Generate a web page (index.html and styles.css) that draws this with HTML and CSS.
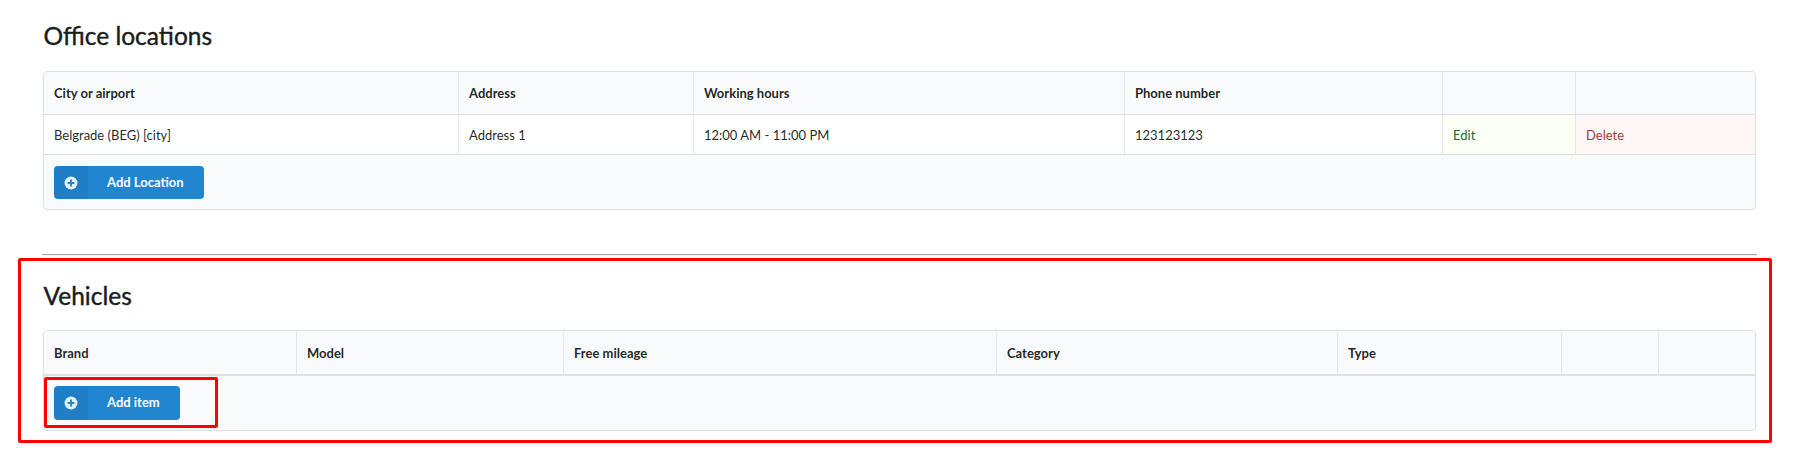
FILE: index.html
```html
<!DOCTYPE html>
<html lang="en">
<head>
<meta charset="utf-8">
<title>Office locations and vehicles</title>
<link rel="stylesheet" href="styles.css">
</head>
<body>
<main class="page">
  <section class="block">
    <h2 class="title">Office locations</h2>
    <div class="panel">
      <table class="grid grid-offices">
        <colgroup>
          <col class="o1"><col class="o2"><col class="o3"><col class="o4"><col class="o5"><col>
        </colgroup>
        <thead>
          <tr><th>City or airport</th><th>Address</th><th>Working hours</th><th>Phone number</th><th></th><th></th></tr>
        </thead>
        <tbody>
          <tr>
            <td>Belgrade (BEG) [city]</td><td>Address 1</td><td>12:00 AM - 11:00 PM</td><td>123123123</td>
            <td class="positive"><a class="act-edit" href="#">Edit</a></td>
            <td class="negative"><a class="act-delete" href="#">Delete</a></td>
          </tr>
        </tbody>
      </table>
      <div class="foot">
        <button class="btn btn-location" type="button">
          <span class="btn-icon"><svg viewBox="0 0 14 14" width="14" height="14"><circle cx="7" cy="7" r="6.5" fill="#e3eff9"/><path d="M7 3.6v6.8M3.6 7h6.8" stroke="#2185d0" stroke-width="1.9"/></svg></span>
          <span class="btn-label">Add Location</span>
        </button>
      </div>
    </div>
  </section>
  <hr class="rule">
  <section class="block block-marked">
    <h2 class="title">Vehicles</h2>
    <div class="panel">
      <table class="grid grid-vehicles">
        <colgroup>
          <col class="v1"><col class="v2"><col class="v3"><col class="v4"><col class="v5"><col class="v6"><col>
        </colgroup>
        <thead>
          <tr><th>Brand</th><th>Model</th><th>Free mileage</th><th>Category</th><th>Type</th><th></th><th></th></tr>
        </thead>
      </table>
      <div class="foot foot-vehicles">
        <button class="btn btn-item" type="button">
          <span class="btn-icon"><svg viewBox="0 0 14 14" width="14" height="14"><circle cx="7" cy="7" r="6.5" fill="#e3eff9"/><path d="M7 3.6v6.8M3.6 7h6.8" stroke="#2185d0" stroke-width="1.9"/></svg></span>
          <span class="btn-label">Add item</span>
        </button>
        <span class="mark-inner"></span>
      </div>
    </div>
  </section>
</main>
</body>
</html>
```
FILE: styles.css
```css
* { box-sizing: border-box; }
html, body { margin: 0; padding: 0; background: #fff; }
body {
  font-family: Lato, "Helvetica Neue", Arial, sans-serif;
  font-size: 13px;
  line-height: 20px;
  color: rgba(0, 0, 0, .87);
  height: 456px;
  overflow: hidden;
}
.page { padding: 0 46px 0 43px; }
.block { display: block; }
.title {
  margin: 0;
  padding: 21px 0 0 .5px;
  height: 71px;
  font-size: 24.5px;
  line-height: 30px;
  font-weight: 400;
  -webkit-text-stroke: .4px #1b1c1d;
  color: #1b1c1d;
}
.panel {
  border: 1px solid #dfe0e2;
  border-radius: 4px;
  background: #f9fafb;
  overflow: hidden;
}
.grid {
  width: 100%;
  border-collapse: separate;
  border-spacing: 0;
  table-layout: fixed;
}
.grid th, .grid td {
  padding: 0 10px;
  text-align: left;
  border-left: 1px solid #e4e5e7;
}
.grid th:first-child, .grid td:first-child { border-left: 0; }
.grid th {
  height: 43px;
  font-weight: 700;
  background: #f9fafb;
  border-bottom: 1px solid #dfe0e2;
  color: rgba(0, 0, 0, .87);
}
.grid td {
  height: 40px;
  background: #fff;
  border-bottom: 1px solid #dcdde0;
  font-weight: 400;
}
.grid-offices .o1 { width: 414px; }
.grid-offices .o2 { width: 235px; }
.grid-offices .o3 { width: 431px; }
.grid-offices .o4 { width: 318px; }
.grid-offices .o5 { width: 133px; }
.grid-vehicles .v1 { width: 252px; }
.grid-vehicles .v2 { width: 267px; }
.grid-vehicles .v3 { width: 433px; }
.grid-vehicles .v4 { width: 341px; }
.grid-vehicles .v5 { width: 224px; }
.grid-vehicles .v6 { width: 97px; }
.grid-vehicles th { height: 45px; border-bottom-width: 2px; }
.grid td.positive { background: #fcfff5; }
.grid td.negative { background: #fff6f6; }
.act-edit { color: #2c662d; text-decoration: none; }
.act-delete { color: #9f3a38; text-decoration: none; }
.foot { padding: 11px 10px 10px; display: flex; }
.foot-vehicles { position: relative; padding: 10px 10px 10px; }
.btn {
  display: flex;
  align-items: stretch;
  height: 33px;
  padding: 0;
  border: 0;
  border-radius: 4px;
  background: #2185d0;
  color: #fff;
  font-family: inherit;
  font-size: 13px;
  font-weight: 700;
  overflow: hidden;
}
.btn-location { width: 150px; }
.btn-item { width: 126px; height: 34px; }
.btn-icon {
  width: 34px;
  flex: none;
  display: flex;
  align-items: center;
  justify-content: center;
  background: rgba(0, 0, 0, .05);
}
.btn-label {
  flex: 1;
  display: flex;
  align-items: center;
  padding-left: 19px;
  padding-bottom: 1px;
}
.btn-item .btn-label { padding-bottom: 2px; }
.rule {
  margin: 44px -1px 0;
  border: 0;
  border-top: 1px solid #a6a6a6;
  border-bottom: 1px solid #f2f2f2;
  height: 2px;
}
.block-marked {
  margin: 2px -16px 0 -25px;
  height: 185px;
  padding: 0 13px 0 22px;
  border: 3px solid #f00;
  border-radius: 2px;
}
.block-marked .title { height: 69px; padding-top: 20px; }
.mark-inner {
  position: absolute;
  left: 0;
  top: 1px;
  width: 174px;
  height: 51px;
  border: 3px solid #f00;
  border-radius: 2px;
}
```
